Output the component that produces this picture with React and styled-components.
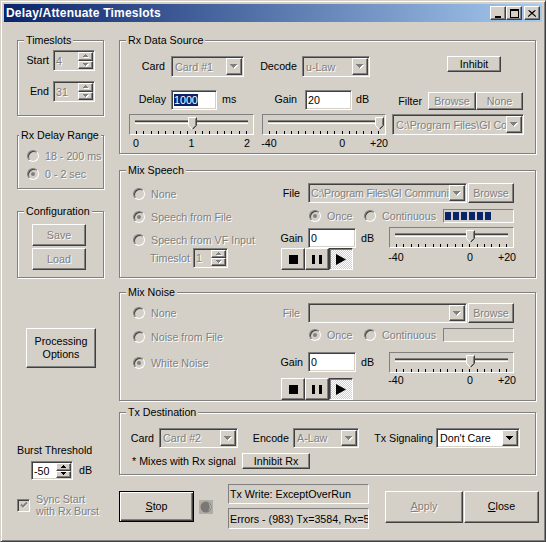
import React from 'react'
import styled, { createGlobalStyle, css } from 'styled-components'

const FACE = '#d4d0c8'

const GlobalStyle = createGlobalStyle`
  html, body { margin: 0; padding: 0; background: ${FACE}; }
  body { font-family: "Liberation Sans", Arial, sans-serif; font-size: 10.7px; color: #000; }
  * { box-sizing: border-box; }
`

const raised = css`
  border: 1px solid;
  border-color: #fff #404040 #404040 #fff;
  box-shadow: inset -1px -1px #808080;
  background: ${FACE};
`
const sunken = css`
  border: 1px solid;
  border-color: #808080 #fff #fff #808080;
  box-shadow: inset 1px 1px #404040, inset -1px -1px ${FACE};
  padding: 1px;
`
const thin = css`
  border: 1px solid;
  border-color: #808080 #fff #fff #808080;
`
const grey = css`
  color: #808080;
  text-shadow: 1px 1px 0 #fff;
`

const Window = styled.div`
  width: 546px;
  height: 542px;
  background: ${FACE};
  border: 1px solid;
  border-color: ${FACE} #404040 #404040 ${FACE};
  box-shadow: inset 1px 1px #fff, inset -1px -1px #808080;
  padding: 3px;
  display: flex;
  flex-direction: column;
`
const TitleBar = styled.div`
  height: 18px;
  flex-shrink: 0;
  background: linear-gradient(to right, #0a246a, #a6caf0);
  display: flex;
  align-items: center;
  padding: 0 2px;
`
const Title = styled.div`
  flex: 1;
  color: #fff;
  font-weight: bold;
  font-size: 12px;
  letter-spacing: 0.2px;
  white-space: nowrap;
`
const CapBtn = styled.span`
  ${raised}
  width: 16px;
  height: 14px;
  margin-left: ${p => p.$gap || 0}px;
  display: flex;
  align-items: center;
  justify-content: center;
`

const Client = styled.div`
  flex: 1;
  display: flex;
  padding: 12px 0 0 13px;
  gap: 15px;
`
const LeftCol = styled.div`
  width: 87px;
  flex-shrink: 0;
  display: flex;
  flex-direction: column;
  align-items: flex-start;
`
const RightCol = styled.div`
  width: 417px;
  flex-shrink: 0;
  display: flex;
  flex-direction: column;
`

const Group = styled.fieldset`
  margin: ${p => p.$mt || 0}px 0 0 0;
  padding: 0;
  min-width: 0;
  width: 100%;
  height: ${p => p.$h}px;
  border: 1px solid #808080;
  box-shadow: inset 1px 1px #fff, 1px 1px #fff;
  display: flex;
  flex-direction: column;
  align-items: flex-start;
`
const Legend = styled.legend`
  margin-left: ${p => p.$ml ?? 6}px;
  padding: 0 2px;
  line-height: 13px;
  background: ${FACE};
  white-space: nowrap;
`

const Row = styled.div`
  display: flex;
  align-items: ${p => p.$ai || 'center'};
  margin-top: ${p => p.$mt || 0}px;
  margin-left: ${p => p.$ml || 0}px;
  ${p => p.$h && css`height: ${p.$h}px;`}
`
const Col = styled.div`
  display: flex;
  flex-direction: column;
  align-items: flex-start;
  flex-shrink: 0;
  ${p => p.$w && css`width: ${p.$w}px;`}
  margin-top: ${p => p.$mt || 0}px;
  margin-left: ${p => p.$ml || 0}px;
  padding-left: ${p => p.$pl || 0}px;
`
const Lbl = styled.span`
  display: block;
  flex-shrink: 0;
  ${p => p.$w && css`width: ${p.$w}px;`}
  text-align: ${p => p.$al || 'right'};
  padding-right: ${p => p.$pr || 0}px;
  padding-left: ${p => p.$pl || 0}px;
  margin-top: ${p => p.$mt || 0}px;
  margin-left: ${p => p.$ml || 0}px;
  line-height: ${p => p.$lh || 13}px;
  white-space: nowrap;
  ${p => p.$dis && grey}
`

const Btn = styled.button`
  ${raised}
  font: inherit;
  color: #000;
  flex-shrink: 0;
  width: ${p => p.$w}px;
  height: ${p => p.$h}px;
  margin: ${p => p.$mt || 0}px 0 0 ${p => p.$ml || 0}px;
  padding: 0;
  line-height: 13px;
  align-self: ${p => p.$self || 'auto'};
  ${p => p.$dis && grey}
  ${p => p.$def && css`
    border-color: #000;
    box-shadow: inset 1px 1px #fff, inset -1px -1px #404040, inset -2px -2px #808080;
  `}
`

const EditBox = styled.div`
  ${sunken}
  padding: 1px 1px 1px 2px;
  flex-shrink: 0;
  width: ${p => p.$w}px;
  height: ${p => p.$h}px;
  margin-left: ${p => p.$ml || 0}px;
  background: ${p => (p.$dis ? FACE : '#fff')};
  display: flex;
  align-items: center;
  white-space: nowrap;
  overflow: hidden;
  ${p => p.$dis && grey}
`
const Sel = styled.span`
  background: #0a246a;
  color: #fff;
  line-height: 12px;
`
const SpinText = styled.span`
  flex: 1;
`
const UpDown = styled.span`
  width: 15px;
  align-self: stretch;
  flex-shrink: 0;
  display: flex;
  flex-direction: column;
`
const SpinBtn = styled.span`
  ${raised}
  flex: 1;
  display: flex;
  align-items: center;
  justify-content: center;
`

const ComboBox = styled.div`
  ${sunken}
  flex-shrink: 0;
  width: ${p => p.$w}px;
  height: ${p => p.$h || 21}px;
  margin-left: ${p => p.$ml || 0}px;
  background: ${p => (p.$dis ? FACE : '#fff')};
  display: flex;
`
const ComboText = styled.span`
  flex: 1;
  overflow: hidden;
  white-space: nowrap;
  padding-left: ${p => (p.$tight ? 1 : 2)}px;
  letter-spacing: ${p => (p.$tight ? '-0.2px' : 'normal')};
  display: flex;
  align-items: center;
  ${p => p.$dis && grey}
`
const DropBtn = styled.span`
  ${raised}
  width: 16px;
  flex-shrink: 0;
  display: flex;
  align-items: center;
  justify-content: center;
`

const RadioItem = styled.span`
  display: flex;
  align-items: center;
  gap: 6px;
  height: 13px;
  flex-shrink: 0;
  ${p => p.$w && css`width: ${p.$w}px;`}
  margin-top: ${p => p.$mt || 0}px;
  margin-left: ${p => p.$ml || 0}px;
  white-space: nowrap;
  ${grey}
`
const RadioDot = styled.span`
  width: 12px;
  height: 12px;
  flex-shrink: 0;
  border-radius: 50%;
  border: 1px solid;
  border-color: #808080 #fff #fff #808080;
  box-shadow: inset 1px 1px #404040;
  background: ${FACE};
  display: flex;
  align-items: center;
  justify-content: center;
  &::after {
    content: '';
    display: ${p => (p.$on ? 'block' : 'none')};
    width: 4px;
    height: 4px;
    border-radius: 50%;
    background: #808080;
  }
`

const CheckBox = styled.span`
  ${sunken}
  padding: 0;
  width: 13px;
  height: 13px;
  flex-shrink: 0;
  background: ${FACE};
  display: flex;
  align-items: center;
  justify-content: center;
`
const SyncText = styled.span`
  margin-left: 6px;
  line-height: 12px;
  ${grey}
`

const Progress = styled.div`
  ${thin}
  flex-shrink: 0;
  width: ${p => p.$w}px;
  height: 14px;
  padding: 2px 1px;
  display: flex;
  gap: 2px;
`
const Block = styled.span`
  width: 6px;
  background: #0a246a;
`

const TGroup = styled.div`
  display: flex;
  margin-top: ${p => p.$mt || 0}px;
  margin-left: ${p => p.$ml || 0}px;
`
const TBtn = styled.span`
  ${raised}
  width: 24px;
  height: 22px;
  display: flex;
  align-items: center;
  justify-content: center;
  ${p => p.$down && css`
    border-color: #404040 #fff #fff #404040;
    box-shadow: inset 1px 1px #808080;
    background: repeating-conic-gradient(#fff 0 25%, ${FACE} 0 50%) 0 0 / 2px 2px;
  `}
`

const SliderCol = styled.div`
  width: ${p => p.$w}px;
  flex-shrink: 0;
  margin-left: ${p => p.$ml || 0}px;
`
const SliderBox = styled.div`
  ${thin}
  position: relative;
  height: 21px;
  padding: 5px 5px 0;
`
const Channel = styled.div`
  height: 4px;
  border-top: 1px solid #808080;
  border-bottom: 1px solid #fff;
  background: linear-gradient(#404040 0 50%, ${FACE} 50%);
`
const Ticks = styled.div`
  display: flex;
  justify-content: space-between;
  margin: 7px 1px 0;
`
const Tick = styled.span`
  width: 1px;
  height: 3px;
  background: #000;
`
const Thumb = styled.svg`
  position: absolute;
  top: 2px;
`
const Scale = styled.div`
  position: relative;
  height: 13px;
  margin-top: ${p => p.$mt || 0}px;
`
const ScaleLbl = styled.span`
  position: absolute;
  top: 0;
  line-height: 13px;
  transform: translateX(-50%);
  white-space: nowrap;
`

const Status = styled.div`
  ${thin}
  width: 100%;
  height: ${p => p.$h}px;
  margin-top: ${p => p.$mt || 0}px;
  padding-left: 1px;
  display: flex;
  align-items: center;
  white-space: nowrap;
  overflow: hidden;
`
const Led = styled.svg`
  margin-left: 5px;
  flex-shrink: 0;
`

const Arrow = ({ up, w = 7, dis }) => {
  const h = Math.ceil(w / 2)
  const rows = Array.from({ length: h }, (_, i) => ({ x: i, y: up ? h - 1 - i : i, width: w - 2 * i }))
  const draw = (d, fill) =>
    rows.map((r, i) => <rect key={fill + i} x={r.x + d} y={r.y + d} width={r.width} height={1} fill={fill} />)
  return (
    <svg width={w + 1} height={h + 1} shapeRendering="crispEdges">
      {dis && draw(1, '#fff')}
      {draw(0, dis ? '#808080' : '#000')}
    </svg>
  )
}

const Combo = ({ w, h, ml, dis, tight, children }) => (
  <ComboBox $w={w} $h={h} $ml={ml} $dis={dis}>
    <ComboText $dis={dis} $tight={tight}>{children}</ComboText>
    <DropBtn><Arrow dis={dis} /></DropBtn>
  </ComboBox>
)

const Spin = ({ w, h, ml, dis, children }) => (
  <EditBox $w={w} $h={h} $ml={ml} $dis={dis}>
    <SpinText>{children}</SpinText>
    <UpDown>
      <SpinBtn><Arrow up w={5} dis={dis} /></SpinBtn>
      <SpinBtn><Arrow w={5} dis={dis} /></SpinBtn>
    </UpDown>
  </EditBox>
)

const Radio = ({ on, mt, ml, w, children }) => (
  <RadioItem $mt={mt} $ml={ml} $w={w}>
    <RadioDot $on={on} />
    {children}
  </RadioItem>
)

const Slider = ({ w, ml, value, labels, lblMt = 2 }) => {
  const span = w - 14
  return (
    <SliderCol $w={w} $ml={ml}>
      <SliderBox>
        <Channel />
        <Ticks>
          {Array.from({ length: 16 }, (_, i) => <Tick key={i} />)}
        </Ticks>
        <Thumb width="9" height="13" style={{ left: 7 + value * span - 5 }}>
          <polygon points="0.5,0.5 8.5,0.5 8.5,8.5 4.5,12.5 0.5,8.5" fill={FACE} />
          <polyline points="0.5,8.5 0.5,0.5 8.5,0.5" fill="none" stroke="#fff" />
          <polyline points="8.5,0.5 8.5,8.5 4.5,12.5" fill="none" stroke="#404040" />
          <polyline points="7.5,1.5 7.5,8.5 4.5,11.5" fill="none" stroke="#808080" />
          <polyline points="0.5,8.5 4.5,12.5" fill="none" stroke="#fff" />
        </Thumb>
      </SliderBox>
      <Scale $mt={lblMt}>
        {labels.map(l => (
          <ScaleLbl key={l.t} style={{ left: 7 + l.at * span }}>{l.t}</ScaleLbl>
        ))}
      </Scale>
    </SliderCol>
  )
}

const Transport = ({ mt, ml }) => (
  <TGroup $mt={mt} $ml={ml}>
    <TBtn>
      <svg width="9" height="9"><rect width="9" height="9" /></svg>
    </TBtn>
    <TBtn>
      <svg width="10" height="9"><rect x="0" width="3" height="9" /><rect x="7" width="3" height="9" /></svg>
    </TBtn>
    <TBtn $down>
      <svg width="10" height="11"><polygon points="0,0 10,5.5 0,11" /></svg>
    </TBtn>
  </TGroup>
)

const delayLabels = [{ t: '0', at: 0 }, { t: '1', at: 0.5 }, { t: '2', at: 1 }]
const gainLabels = [{ t: '-40', at: 0 }, { t: '0', at: 2 / 3 }, { t: '+20', at: 1 }]

export default function App() {
  return (
    <>
      <GlobalStyle />
      <Window>
        <TitleBar>
          <Title>Delay/Attenuate Timeslots</Title>
          <CapBtn>
            <svg width="8" height="9"><rect x="1" y="7" width="6" height="2" /></svg>
          </CapBtn>
          <CapBtn>
            <svg width="9" height="9">
              <rect x="0.5" y="0.5" width="8" height="8" fill="none" stroke="#000" />
              <rect x="0" y="1" width="9" height="1" />
            </svg>
          </CapBtn>
          <CapBtn $gap={2}>
            <svg width="8" height="7">
              <path d="M0.5 0.5 L7.5 6.5 M7.5 0.5 L0.5 6.5 M1.5 0.5 L8 6.5 M6.5 0.5 L0 6.5" stroke="#000" strokeWidth="1" />
            </svg>
          </CapBtn>
        </TitleBar>

        <Client>
          <LeftCol>
            <Group $h={82}>
              <Legend>Timeslots</Legend>
              <Row $mt={3}>
                <Lbl $w={35} $pr={4}>Start</Lbl>
                <Spin w={42} h={21} dis>4</Spin>
              </Row>
              <Row $mt={10}>
                <Lbl $w={35} $pr={4}>End</Lbl>
                <Spin w={42} h={21} dis>31</Spin>
              </Row>
            </Group>

            <Group $mt={13} $h={60}>
              <Legend $ml={1}>Rx Delay Range</Legend>
              <Radio ml={9} mt={7}>18 - 200 ms</Radio>
              <Radio ml={9} mt={5} on>0 - 2 sec</Radio>
            </Group>

            <Group $mt={16} $h={73}>
              <Legend>Configuration</Legend>
              <Btn $w={54} $h={22} $ml={14} $mt={6} $dis>Save</Btn>
              <Btn $w={54} $h={22} $ml={14} $mt={2} $dis>Load</Btn>
            </Group>

            <Btn $w={70} $h={40} $ml={9} $mt={50}>Processing<br />Options</Btn>

            <Lbl $al="left" $mt={76}>Burst Threshold</Lbl>
            <Row $mt={4} $ml={14}>
              <Spin w={42} h={19}>-50</Spin>
              <Lbl $pl={6}>dB</Lbl>
            </Row>
            <Row $mt={13}>
              <CheckBox>
                <svg width="8" height="8">
                  <polyline points="1,3.5 3,5.5 7,1.5" fill="none" stroke="#fff" strokeWidth="2" transform="translate(0.5,0.5)" />
                  <polyline points="1,3.5 3,5.5 7,1.5" fill="none" stroke="#808080" strokeWidth="2" />
                </svg>
              </CheckBox>
              <SyncText>Sync Start<br />with Rx Burst</SyncText>
            </Row>
          </LeftCol>

          <RightCol>
            <Group $h={120}>
              <Legend>Rx Data Source</Legend>
              <Row $mt={9}>
                <Lbl $w={51} $pr={6}>Card</Lbl>
                <Combo w={73} dis>Card #1</Combo>
                <Lbl $w={58} $pr={5}>Decode</Lbl>
                <Combo w={68} dis>u-Law</Combo>
                <Btn $w={54} $h={16} $ml={77} $self="flex-start">Inhibit</Btn>
              </Row>
              <Row $mt={12}>
                <Lbl $w={51} $pr={5}>Delay</Lbl>
                <EditBox $w={46} $h={20}><Sel>1000</Sel></EditBox>
                <Lbl $w={21} $pl={5} $al="left">ms</Lbl>
                <Lbl $w={67} $pr={8}>Gain</Lbl>
                <EditBox $w={47} $h={20}>20</EditBox>
                <Lbl $w={21} $pl={4} $al="left">dB</Lbl>
                <Row $mt={3}>
                  <Lbl $w={55} $pr={6}>Filter</Lbl>
                  <Btn $w={48} $h={18} $dis>Browse</Btn>
                  <Btn $w={47} $h={18} $dis>None</Btn>
                </Row>
              </Row>
              <Row $mt={4} $ai="flex-start">
                <Slider w={125} ml={9} value={0.5} labels={delayLabels} />
                <Slider w={124} ml={8} value={1} labels={gainLabels} />
                <Combo w={132} ml={6} dis>C:\Program Files\GI Co</Combo>
              </Row>
            </Group>

            <Group $mt={10} $h={114}>
              <Legend>Mix Speech</Legend>
              <Row $ai="flex-start">
                <Col $w={160} $pl={13}>
                  <Radio mt={10}>None</Radio>
                  <Radio mt={10} on>Speech from File</Radio>
                  <Radio mt={10}>Speech from VF Input</Radio>
                  <Row $mt={2} $ml={17}>
                    <Lbl $w={43} $al="left" $dis>Timeslot</Lbl>
                    <Spin w={35} h={20} dis>1</Spin>
                  </Row>
                </Col>
                <Col>
                  <Row $mt={6}>
                    <Lbl $w={28} $pr={8}>File</Lbl>
                    <Combo w={159} h={20} dis tight>C:\Program Files\GI Communi</Combo>
                    <Btn $w={46} $h={20} $ml={1} $dis>Browse</Btn>
                  </Row>
                  <Row $mt={6}>
                    <Radio ml={29} w={55} on>Once</Radio>
                    <Radio w={79}>Continuous</Radio>
                    <Progress $w={71}>
                      {Array.from({ length: 6 }, (_, i) => <Block key={i} />)}
                    </Progress>
                  </Row>
                  <Row $mt={4} $ai="flex-start">
                    <Col $w={109}>
                      <Row $mt={1}>
                        <Lbl $w={28} $pr={5}>Gain</Lbl>
                        <EditBox $w={48} $h={20}>0</EditBox>
                        <Lbl $pl={5}>dB</Lbl>
                      </Row>
                      <Transport ml={1} />
                    </Col>
                    <Slider w={125} value={2 / 3} labels={gainLabels} lblMt={3} />
                  </Row>
                </Col>
              </Row>
            </Group>

            <Group $mt={8} $h={115}>
              <Legend>Mix Noise</Legend>
              <Row $ai="flex-start">
                <Col $w={160} $pl={13}>
                  <Radio mt={7}>None</Radio>
                  <Radio mt={11}>Noise from File</Radio>
                  <Radio mt={13} on>White Noise</Radio>
                </Col>
                <Col>
                  <Row $mt={4}>
                    <Lbl $w={28} $pr={8} $dis>File</Lbl>
                    <Combo w={159} h={20} dis />
                    <Btn $w={46} $h={20} $ml={1} $dis>Browse</Btn>
                  </Row>
                  <Row $mt={5}>
                    <Radio ml={29} w={55} on>Once</Radio>
                    <Radio w={79}>Continuous</Radio>
                    <Progress $w={71} />
                  </Row>
                  <Row $mt={10} $ai="flex-start">
                    <Col $w={109}>
                      <Row>
                        <Lbl $w={28} $pr={5}>Gain</Lbl>
                        <EditBox $w={48} $h={20}>0</EditBox>
                        <Lbl $pl={5}>dB</Lbl>
                      </Row>
                      <Transport ml={1} mt={6} />
                    </Col>
                    <Slider w={125} value={2 / 3} labels={gainLabels} lblMt={1} />
                  </Row>
                </Col>
              </Row>
            </Group>

            <Group $mt={5} $h={69}>
              <Legend>Tx Destination</Legend>
              <Row $mt={9}>
                <Lbl $w={39} $pr={5}>Card</Lbl>
                <Combo w={79} h={20} dis>Card #2</Combo>
                <Lbl $w={55} $pr={4}>Encode</Lbl>
                <Combo w={66} h={20} dis>A-Law</Combo>
                <Lbl $w={77} $pr={3}>Tx Signaling</Lbl>
                <Combo w={84} h={20}>Don't Care</Combo>
              </Row>
              <Row $mt={5}>
                <Lbl $w={122} $pl={12} $al="left">* Mixes with Rx signal</Lbl>
                <Btn $w={68} $h={16}>Inhibit Rx</Btn>
              </Row>
            </Group>

            <Row $mt={9}>
              <Btn $w={75} $h={31} $def><u>S</u>top</Btn>
              <Led width="14" height="14">
                <rect width="14" height="14" fill="#b0aca6" />
                <circle cx="7" cy="7" r="5.5" fill="#7a7874" />
                <path d="M8 2.2 A5 5 0 0 1 8 11.8 A4 5 0 0 0 8 2.2 Z" fill="#e6e6e6" />
              </Led>
              <Col $w={141} $ml={15}>
                <Status $h={20}>Tx Write: ExceptOverRun</Status>
                <Status $h={21} $mt={4}>Errors - (983) Tx=3584, Rx=5</Status>
              </Col>
              <Btn $w={78} $h={32} $ml={16} $dis><u>A</u>pply</Btn>
              <Btn $w={75} $h={32} $ml={1}><u>C</u>lose</Btn>
            </Row>
          </RightCol>
        </Client>
      </Window>
    </>
  )
}
